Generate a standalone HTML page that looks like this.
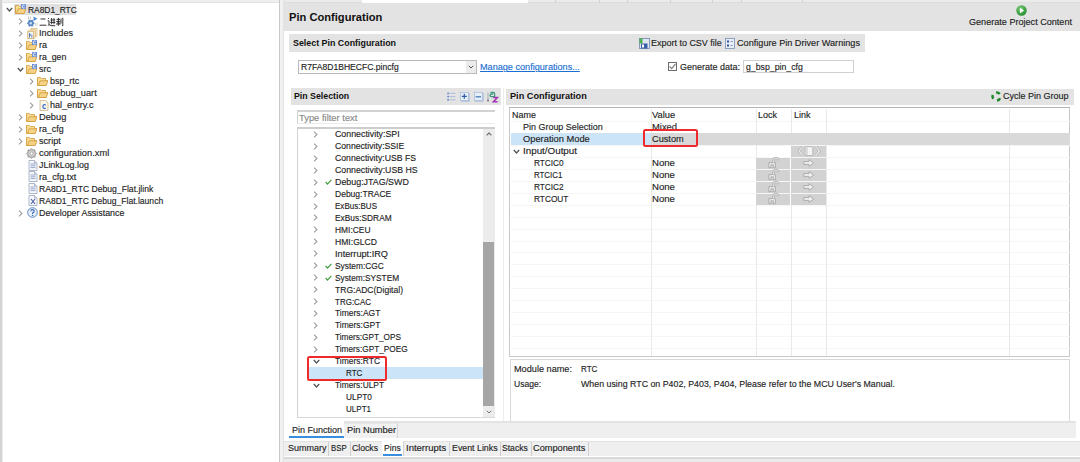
<!DOCTYPE html><html><head><meta charset="utf-8"><style>html,body{margin:0;padding:0;width:1080px;height:462px;overflow:hidden;background:#fff;}body{position:relative;font-family:"Liberation Sans", sans-serif;}div{box-sizing:border-box;}svg{overflow:visible}.t{-webkit-text-stroke:0.14px currentColor}</style></head><body>
<div style="position:absolute;left:0px;top:0px;width:280px;height:3px;background:#efefef;border-bottom:1px solid #e2e2e2"></div>
<div style="position:absolute;left:284px;top:0px;width:796px;height:3px;background:#ebebeb;border-bottom:1px solid #dedede"></div>
<div style="position:absolute;left:362px;top:0px;width:166px;height:3px;background:#fff"></div>
<div style="position:absolute;left:555px;top:0px;width:1px;height:2.5px;background:#d2d2d2"></div>
<div style="position:absolute;left:599.4px;top:0px;width:1px;height:2.5px;background:#d2d2d2"></div>
<div style="position:absolute;left:627px;top:0px;width:1px;height:2.5px;background:#d2d2d2"></div>
<div style="position:absolute;left:670px;top:0px;width:1px;height:2.5px;background:#d2d2d2"></div>
<div style="position:absolute;left:712px;top:0px;width:1px;height:2.5px;background:#d2d2d2"></div>
<div style="position:absolute;left:741px;top:0px;width:1px;height:2.5px;background:#d2d2d2"></div>
<div style="position:absolute;left:801.5px;top:0px;width:1px;height:2.5px;background:#d2d2d2"></div>
<div style="position:absolute;left:0px;top:0px;width:1.5px;height:462px;background:#d3d3d3"></div>
<div style="position:absolute;left:1.5px;top:0px;width:1px;height:462px;background:#ededed"></div>
<div style="position:absolute;left:279px;top:0px;width:1px;height:462px;background:#c9c9c9"></div>
<div style="position:absolute;left:280px;top:0px;width:4px;height:462px;background:#f1f1f1"></div>
<div style="position:absolute;left:283px;top:0px;width:1px;height:462px;background:#e3e3e3"></div>
<div style="position:absolute;left:14px;top:3.5px;width:62px;height:11.7px;background:#e0e0e0"></div>
<svg style="position:absolute;left:6.2px;top:7.3px" width="7" height="5" viewBox="0 0 7 5"><path d="M0.8 1 L3.5 4 L6.2 1" fill="none" stroke="#555" stroke-width="1.3"/></svg>
<svg style="position:absolute;left:15.2px;top:4.3px" width="11" height="10" viewBox="0 0 11 10"><path d="M0.5 2 L0.5 9.5 L9 9.5 L10.5 4.5 L3 4.5 L1.5 9" fill="#f3cf7a" stroke="#d29b3a" stroke-width="0.8"/><path d="M0.5 9.5 L0.5 1.5 L3.5 1.5 L4.5 2.5 L8.5 2.5 L8.5 4.5" fill="#f7dc92" stroke="#d29b3a" stroke-width="0.8"/><path d="M1.5 9.5 L3 4.8 L10.8 4.8 L9.2 9.5 Z" fill="#f5d386" stroke="#d29b3a" stroke-width="0.8"/><rect x="6" y="0" width="5" height="5" fill="#6d8fd6"/><path d="M9.6 1.3 Q8.5 0.6 7.7 1.3 Q7 2.5 7.7 3.7 Q8.5 4.4 9.6 3.7" fill="none" stroke="#fff" stroke-width="0.9"/></svg>
<div class="t" style="position:absolute;left:27.7px;top:3.5px;font-size:9.5px;line-height:11.97px;color:#222;font-weight:normal;white-space:pre;transform:scaleX(0.8830);transform-origin:0 0;">RA8D1_RTC</div>
<svg style="position:absolute;left:18.0px;top:18.07px" width="5" height="7" viewBox="0 0 5 7"><path d="M1 0.6 L4 3.5 L1 6.4" fill="none" stroke="#9c9c9c" stroke-width="1.05"/></svg>
<svg style="position:absolute;left:26.799999999999997px;top:15.770000000000001px" width="11" height="11" viewBox="0 0 11 11"><polygon points="7.40,7.20 6.05,8.50 5.60,10.32 3.80,9.80 2.00,10.32 1.55,8.50 0.20,7.20 1.55,5.90 2.00,4.08 3.80,4.60 5.60,4.08 6.05,5.90" fill="#5b86c4" stroke="#3d6aa8" stroke-width="0.5"/><circle cx="3.8" cy="7.2" r="1.2" fill="#cfe3f5"/><path d="M6.5 0.5 L10.5 2.8 L6.5 5.1 Z" fill="#4f8fd0"/><path d="M1.5 0.5 V3.5 M3.3 0.5 V3.5" stroke="#b0b0b0" stroke-width="0.7"/><path d="M8.5 7 V10 M10 7 V10" stroke="#c0c0c0" stroke-width="0.6"/></svg>
<svg style="position:absolute;left:39.3px;top:16.67px" width="25" height="10" viewBox="0 0 25 10"><g fill="none" stroke="#2a2a2a" stroke-width="0.95"><path d="M1.5 2 H6.5 M0.6 8.2 H7.4"/><path d="M9.2 1 L10 2 M8.6 3.8 H10 V7.6 L8.8 8.6 M10 7.6 Q11 9 16.2 8.8 M11.4 3 H16.2 M11.2 5.4 H16.4 M12.6 1 V7.2 M15 1 V7.2"/><path d="M17.6 2.4 H21 M19.4 0.8 V8.8 M17.2 4.4 H21.4 M18 6 V8 M18 6 H20.8 V7.8 M22 1.6 V6.6 M23.8 0.8 V8.8 L23 8.4"/></g></svg>
<svg style="position:absolute;left:18.0px;top:30.040000000000003px" width="5" height="7" viewBox="0 0 5 7"><path d="M1 0.6 L4 3.5 L1 6.4" fill="none" stroke="#9c9c9c" stroke-width="1.05"/></svg>
<svg style="position:absolute;left:26.9px;top:27.64px" width="11" height="11" viewBox="0 0 11 11"><rect x="4.5" y="0.5" width="5.5" height="7.5" fill="#fbf3de" stroke="#d9b66a" stroke-width="0.7"/><rect x="2.8" y="1.8" width="5.5" height="7.5" fill="#fbf3de" stroke="#d9b66a" stroke-width="0.7"/><rect x="0.8" y="3.2" width="6" height="7.5" fill="#eef2f8" stroke="#d2a650" stroke-width="0.8"/><path d="M2.5 5 V9.5 M2.5 7.3 Q4.5 6 4.8 7.5 V9.5" fill="none" stroke="#3d5fa8" stroke-width="0.8"/></svg>
<div class="t" style="position:absolute;left:38.8px;top:27.44px;font-size:9.5px;line-height:11.97px;color:#222;font-weight:normal;white-space:pre;transform:scaleX(0.9635);transform-origin:0 0;">Includes</div>
<svg style="position:absolute;left:18.0px;top:42.010000000000005px" width="5" height="7" viewBox="0 0 5 7"><path d="M1 0.6 L4 3.5 L1 6.4" fill="none" stroke="#9c9c9c" stroke-width="1.05"/></svg>
<svg style="position:absolute;left:26.299999999999997px;top:40.21px" width="11" height="10" viewBox="0 0 11 10"><path d="M0.5 2 L0.5 9.5 L9 9.5 L10.5 4.5 L3 4.5 L1.5 9" fill="#f3cf7a" stroke="#d29b3a" stroke-width="0.8"/><path d="M0.5 9.5 L0.5 1.5 L3.5 1.5 L4.5 2.5 L8.5 2.5 L8.5 4.5" fill="#f7dc92" stroke="#d29b3a" stroke-width="0.8"/><path d="M1.5 9.5 L3 4.8 L10.8 4.8 L9.2 9.5 Z" fill="#f5d386" stroke="#d29b3a" stroke-width="0.8"/><rect x="6" y="0" width="5" height="5" fill="#6d8fd6"/><path d="M9.6 1.3 Q8.5 0.6 7.7 1.3 Q7 2.5 7.7 3.7 Q8.5 4.4 9.6 3.7" fill="none" stroke="#fff" stroke-width="0.9"/></svg>
<div class="t" style="position:absolute;left:38.8px;top:39.410000000000004px;font-size:9.5px;line-height:11.97px;color:#222;font-weight:normal;white-space:pre;transform:scaleX(0.9482);transform-origin:0 0;">ra</div>
<svg style="position:absolute;left:18.0px;top:53.980000000000004px" width="5" height="7" viewBox="0 0 5 7"><path d="M1 0.6 L4 3.5 L1 6.4" fill="none" stroke="#9c9c9c" stroke-width="1.05"/></svg>
<svg style="position:absolute;left:26.299999999999997px;top:52.18px" width="11" height="10" viewBox="0 0 11 10"><path d="M0.5 2 L0.5 9.5 L9 9.5 L10.5 4.5 L3 4.5 L1.5 9" fill="#f3cf7a" stroke="#d29b3a" stroke-width="0.8"/><path d="M0.5 9.5 L0.5 1.5 L3.5 1.5 L4.5 2.5 L8.5 2.5 L8.5 4.5" fill="#f7dc92" stroke="#d29b3a" stroke-width="0.8"/><path d="M1.5 9.5 L3 4.8 L10.8 4.8 L9.2 9.5 Z" fill="#f5d386" stroke="#d29b3a" stroke-width="0.8"/><rect x="6" y="0" width="5" height="5" fill="#6d8fd6"/><path d="M9.6 1.3 Q8.5 0.6 7.7 1.3 Q7 2.5 7.7 3.7 Q8.5 4.4 9.6 3.7" fill="none" stroke="#fff" stroke-width="0.9"/></svg>
<div class="t" style="position:absolute;left:38.8px;top:51.38px;font-size:9.5px;line-height:11.97px;color:#222;font-weight:normal;white-space:pre;transform:scaleX(0.9259);transform-origin:0 0;">ra_gen</div>
<svg style="position:absolute;left:17.3px;top:67.15px" width="7" height="5" viewBox="0 0 7 5"><path d="M0.8 1 L3.5 4 L6.2 1" fill="none" stroke="#555" stroke-width="1.3"/></svg>
<svg style="position:absolute;left:26.299999999999997px;top:64.15px" width="11" height="10" viewBox="0 0 11 10"><path d="M0.5 2 L0.5 9.5 L9 9.5 L10.5 4.5 L3 4.5 L1.5 9" fill="#f3cf7a" stroke="#d29b3a" stroke-width="0.8"/><path d="M0.5 9.5 L0.5 1.5 L3.5 1.5 L4.5 2.5 L8.5 2.5 L8.5 4.5" fill="#f7dc92" stroke="#d29b3a" stroke-width="0.8"/><path d="M1.5 9.5 L3 4.8 L10.8 4.8 L9.2 9.5 Z" fill="#f5d386" stroke="#d29b3a" stroke-width="0.8"/><rect x="6" y="0" width="5" height="5" fill="#6d8fd6"/><path d="M9.6 1.3 Q8.5 0.6 7.7 1.3 Q7 2.5 7.7 3.7 Q8.5 4.4 9.6 3.7" fill="none" stroke="#fff" stroke-width="0.9"/></svg>
<div class="t" style="position:absolute;left:38.8px;top:63.35px;font-size:9.5px;line-height:11.97px;color:#222;font-weight:normal;white-space:pre;transform:scaleX(0.9470);transform-origin:0 0;">src</div>
<svg style="position:absolute;left:29.099999999999998px;top:77.92px" width="5" height="7" viewBox="0 0 5 7"><path d="M1 0.6 L4 3.5 L1 6.4" fill="none" stroke="#9c9c9c" stroke-width="1.05"/></svg>
<svg style="position:absolute;left:37.4px;top:76.12px" width="11" height="10" viewBox="0 0 11 10"><path d="M0.5 2 L0.5 9.5 L9 9.5 L10.5 4.5 L3 4.5 L1.5 9" fill="#f3cf7a" stroke="#d29b3a" stroke-width="0.8"/><path d="M0.5 9.5 L0.5 1.5 L3.5 1.5 L4.5 2.5 L8.5 2.5 L8.5 4.5" fill="#f7dc92" stroke="#d29b3a" stroke-width="0.8"/><path d="M1.5 9.5 L3 4.8 L10.8 4.8 L9.2 9.5 Z" fill="#f5d386" stroke="#d29b3a" stroke-width="0.8"/></svg>
<div class="t" style="position:absolute;left:49.9px;top:75.32000000000001px;font-size:9.5px;line-height:11.97px;color:#222;font-weight:normal;white-space:pre;transform:scaleX(0.9404);transform-origin:0 0;">bsp_rtc</div>
<svg style="position:absolute;left:29.099999999999998px;top:89.89px" width="5" height="7" viewBox="0 0 5 7"><path d="M1 0.6 L4 3.5 L1 6.4" fill="none" stroke="#9c9c9c" stroke-width="1.05"/></svg>
<svg style="position:absolute;left:37.4px;top:88.09px" width="11" height="10" viewBox="0 0 11 10"><path d="M0.5 2 L0.5 9.5 L9 9.5 L10.5 4.5 L3 4.5 L1.5 9" fill="#f3cf7a" stroke="#d29b3a" stroke-width="0.8"/><path d="M0.5 9.5 L0.5 1.5 L3.5 1.5 L4.5 2.5 L8.5 2.5 L8.5 4.5" fill="#f7dc92" stroke="#d29b3a" stroke-width="0.8"/><path d="M1.5 9.5 L3 4.8 L10.8 4.8 L9.2 9.5 Z" fill="#f5d386" stroke="#d29b3a" stroke-width="0.8"/></svg>
<div class="t" style="position:absolute;left:49.9px;top:87.29px;font-size:9.5px;line-height:11.97px;color:#222;font-weight:normal;white-space:pre;transform:scaleX(0.9713);transform-origin:0 0;">debug_uart</div>
<svg style="position:absolute;left:29.099999999999998px;top:101.86px" width="5" height="7" viewBox="0 0 5 7"><path d="M1 0.6 L4 3.5 L1 6.4" fill="none" stroke="#9c9c9c" stroke-width="1.05"/></svg>
<svg style="position:absolute;left:38.6px;top:99.66000000000001px" width="10" height="11" viewBox="0 0 10 11"><path d="M1 0.5 L6.5 0.5 L9 3 L9 10.5 L1 10.5 Z" fill="#fbf6e6" stroke="#c9b58a" stroke-width="0.8"/><path d="M6.8 5.2 Q5.5 4.3 4.3 5.1 Q3.4 6.5 4.3 8 Q5.5 8.8 6.8 8" fill="none" stroke="#3d6fc9" stroke-width="1.2"/></svg>
<div class="t" style="position:absolute;left:49.9px;top:99.26px;font-size:9.5px;line-height:11.97px;color:#222;font-weight:normal;white-space:pre;transform:scaleX(0.9527);transform-origin:0 0;">hal_entry.c</div>
<svg style="position:absolute;left:18.0px;top:113.83px" width="5" height="7" viewBox="0 0 5 7"><path d="M1 0.6 L4 3.5 L1 6.4" fill="none" stroke="#9c9c9c" stroke-width="1.05"/></svg>
<svg style="position:absolute;left:26.299999999999997px;top:112.03px" width="11" height="10" viewBox="0 0 11 10"><path d="M0.5 2 L0.5 9.5 L9 9.5 L10.5 4.5 L3 4.5 L1.5 9" fill="#f3cf7a" stroke="#d29b3a" stroke-width="0.8"/><path d="M0.5 9.5 L0.5 1.5 L3.5 1.5 L4.5 2.5 L8.5 2.5 L8.5 4.5" fill="#f7dc92" stroke="#d29b3a" stroke-width="0.8"/><path d="M1.5 9.5 L3 4.8 L10.8 4.8 L9.2 9.5 Z" fill="#f5d386" stroke="#d29b3a" stroke-width="0.8"/></svg>
<div class="t" style="position:absolute;left:38.8px;top:111.23px;font-size:9.5px;line-height:11.97px;color:#222;font-weight:normal;white-space:pre;transform:scaleX(0.9750);transform-origin:0 0;">Debug</div>
<svg style="position:absolute;left:18.0px;top:125.8px" width="5" height="7" viewBox="0 0 5 7"><path d="M1 0.6 L4 3.5 L1 6.4" fill="none" stroke="#9c9c9c" stroke-width="1.05"/></svg>
<svg style="position:absolute;left:26.299999999999997px;top:124.0px" width="11" height="10" viewBox="0 0 11 10"><path d="M0.5 2 L0.5 9.5 L9 9.5 L10.5 4.5 L3 4.5 L1.5 9" fill="#f3cf7a" stroke="#d29b3a" stroke-width="0.8"/><path d="M0.5 9.5 L0.5 1.5 L3.5 1.5 L4.5 2.5 L8.5 2.5 L8.5 4.5" fill="#f7dc92" stroke="#d29b3a" stroke-width="0.8"/><path d="M1.5 9.5 L3 4.8 L10.8 4.8 L9.2 9.5 Z" fill="#f5d386" stroke="#d29b3a" stroke-width="0.8"/></svg>
<div class="t" style="position:absolute;left:38.8px;top:123.2px;font-size:9.5px;line-height:11.97px;color:#222;font-weight:normal;white-space:pre;transform:scaleX(0.9316);transform-origin:0 0;">ra_cfg</div>
<svg style="position:absolute;left:18.0px;top:137.77px" width="5" height="7" viewBox="0 0 5 7"><path d="M1 0.6 L4 3.5 L1 6.4" fill="none" stroke="#9c9c9c" stroke-width="1.05"/></svg>
<svg style="position:absolute;left:26.299999999999997px;top:135.97000000000003px" width="11" height="10" viewBox="0 0 11 10"><path d="M0.5 2 L0.5 9.5 L9 9.5 L10.5 4.5 L3 4.5 L1.5 9" fill="#f3cf7a" stroke="#d29b3a" stroke-width="0.8"/><path d="M0.5 9.5 L0.5 1.5 L3.5 1.5 L4.5 2.5 L8.5 2.5 L8.5 4.5" fill="#f7dc92" stroke="#d29b3a" stroke-width="0.8"/><path d="M1.5 9.5 L3 4.8 L10.8 4.8 L9.2 9.5 Z" fill="#f5d386" stroke="#d29b3a" stroke-width="0.8"/></svg>
<div class="t" style="position:absolute;left:38.8px;top:135.17000000000002px;font-size:9.5px;line-height:11.97px;color:#222;font-weight:normal;white-space:pre;transform:scaleX(0.9602);transform-origin:0 0;">script</div>
<svg style="position:absolute;left:26.299999999999997px;top:147.54000000000002px" width="11" height="11" viewBox="0 0 11 11"><polygon points="10.50,5.50 9.10,6.99 9.04,9.04 6.99,9.10 5.50,10.50 4.01,9.10 1.96,9.04 1.90,6.99 0.50,5.50 1.90,4.01 1.96,1.96 4.01,1.90 5.50,0.50 6.99,1.90 9.04,1.96 9.10,4.01" fill="#bdbdbd" stroke="#8a8a8a" stroke-width="0.7"/><circle cx="5.5" cy="5.5" r="2.8" fill="#d6d6d6"/><circle cx="5.5" cy="5.5" r="1.5" fill="#fff" stroke="#8a8a8a" stroke-width="0.6"/></svg>
<div class="t" style="position:absolute;left:38.8px;top:147.14000000000001px;font-size:9.5px;line-height:11.97px;color:#222;font-weight:normal;white-space:pre;transform:scaleX(0.9775);transform-origin:0 0;">configuration.xml</div>
<svg style="position:absolute;left:27.499999999999996px;top:159.51000000000002px" width="10" height="11" viewBox="0 0 10 11"><path d="M1 0.5 L6.5 0.5 L9 3 L9 10.5 L1 10.5 Z" fill="#f8f8fb" stroke="#9aa7c0" stroke-width="0.8"/><path d="M6.5 0.5 L6.5 3 L9 3" fill="#dde" stroke="#9aa7c0" stroke-width="0.7"/><path d="M2.5 4 H7.5 M2.5 5.8 H7.5 M2.5 7.6 H7.5" stroke="#7d93c4" stroke-width="0.8"/></svg>
<div class="t" style="position:absolute;left:38.8px;top:159.11px;font-size:9.5px;line-height:11.97px;color:#222;font-weight:normal;white-space:pre;transform:scaleX(0.9352);transform-origin:0 0;">JLinkLog.log</div>
<svg style="position:absolute;left:27.499999999999996px;top:171.48000000000002px" width="10" height="11" viewBox="0 0 10 11"><path d="M1 0.5 L6.5 0.5 L9 3 L9 10.5 L1 10.5 Z" fill="#f8f8fb" stroke="#9aa7c0" stroke-width="0.8"/><path d="M6.5 0.5 L6.5 3 L9 3" fill="#dde" stroke="#9aa7c0" stroke-width="0.7"/><path d="M2.5 4 H7.5 M2.5 5.8 H7.5 M2.5 7.6 H7.5" stroke="#7d93c4" stroke-width="0.8"/></svg>
<div class="t" style="position:absolute;left:38.8px;top:171.08px;font-size:9.5px;line-height:11.97px;color:#222;font-weight:normal;white-space:pre;transform:scaleX(0.9571);transform-origin:0 0;">ra_cfg.txt</div>
<svg style="position:absolute;left:27.499999999999996px;top:183.45000000000002px" width="10" height="11" viewBox="0 0 10 11"><path d="M1 0.5 L6.5 0.5 L9 3 L9 10.5 L1 10.5 Z" fill="#f8f8fb" stroke="#9aa7c0" stroke-width="0.8"/><path d="M6.5 0.5 L6.5 3 L9 3" fill="#dde" stroke="#9aa7c0" stroke-width="0.7"/><path d="M2.5 4 H7.5 M2.5 5.8 H7.5 M2.5 7.6 H7.5" stroke="#7d93c4" stroke-width="0.8"/></svg>
<div class="t" style="position:absolute;left:38.8px;top:183.05px;font-size:9.5px;line-height:11.97px;color:#222;font-weight:normal;white-space:pre;transform:scaleX(0.9069);transform-origin:0 0;">RA8D1_RTC Debug_Flat.jlink</div>
<svg style="position:absolute;left:27.499999999999996px;top:195.42000000000002px" width="10" height="11" viewBox="0 0 10 11"><path d="M1 0.5 L6.5 0.5 L9 3 L9 10.5 L1 10.5 Z" fill="#f8f8fb" stroke="#9aa7c0" stroke-width="0.8"/><path d="M6.5 0.5 L6.5 3 L9 3" fill="#dde" stroke="#9aa7c0" stroke-width="0.7"/><path d="M3 4 L7 9 M7 4 L3 9" stroke="#4a5fa5" stroke-width="1.1"/></svg>
<div class="t" style="position:absolute;left:38.8px;top:195.02px;font-size:9.5px;line-height:11.97px;color:#222;font-weight:normal;white-space:pre;transform:scaleX(0.9022);transform-origin:0 0;">RA8D1_RTC Debug_Flat.launch</div>
<svg style="position:absolute;left:18.0px;top:209.59px" width="5" height="7" viewBox="0 0 5 7"><path d="M1 0.6 L4 3.5 L1 6.4" fill="none" stroke="#9c9c9c" stroke-width="1.05"/></svg>
<svg style="position:absolute;left:26.499999999999996px;top:207.29000000000002px" width="11" height="11" viewBox="0 0 11 11"><circle cx="5.5" cy="5.5" r="4.8" fill="#e8f0fa" stroke="#5a88c8" stroke-width="1"/><path d="M3.8 4.3 Q3.8 2.6 5.5 2.6 Q7.2 2.6 7.2 4.2 Q7.2 5.2 5.6 5.9 V6.9" fill="none" stroke="#3b6bb0" stroke-width="1.1"/><circle cx="5.6" cy="8.4" r="0.7" fill="#3b6bb0"/></svg>
<div class="t" style="position:absolute;left:38.8px;top:206.99px;font-size:9.5px;line-height:11.97px;color:#222;font-weight:normal;white-space:pre;transform:scaleX(0.9348);transform-origin:0 0;">Developer Assistance</div>
<div style="position:absolute;left:284px;top:3px;width:796px;height:27.5px;background:#e3e3e3"></div>
<div class="t" style="position:absolute;left:289.4px;top:9.8px;font-size:11.5px;line-height:14px;color:#111;font-weight:bold;white-space:pre;transform:scaleX(0.9682);transform-origin:0 0;-webkit-text-stroke:0">Pin Configuration</div>
<svg style="position:absolute;left:1016px;top:5px" width="11" height="11" viewBox="0 0 11 11"><defs><radialGradient id="gg" cx="0.4" cy="0.35" r="0.7"><stop offset="0" stop-color="#7fd07a"/><stop offset="1" stop-color="#1f8a2a"/></radialGradient></defs><circle cx="5.5" cy="5.5" r="5.2" fill="url(#gg)"/><path d="M4 2.8 L8 5.5 L4 8.2 Z" fill="#fff"/></svg>
<div class="t" style="position:absolute;left:969.2px;top:15.5px;font-size:9.5px;line-height:12px;color:#222;font-weight:normal;white-space:pre;transform:scaleX(0.9561);transform-origin:0 0;">Generate Project Content</div>
<div style="position:absolute;left:289px;top:34.3px;width:576px;height:17.7px;background:#e3e3e3"></div>
<div class="t" style="position:absolute;left:293px;top:37.3px;font-size:9.5px;line-height:12px;color:#111;font-weight:bold;white-space:pre;transform:scaleX(0.9337);transform-origin:0 0;-webkit-text-stroke:0">Select Pin Configuration</div>
<svg style="position:absolute;left:638.5px;top:37.5px" width="11" height="11" viewBox="0 0 11 11"><rect x="0.5" y="0.5" width="10" height="10" fill="#dfe6f0" stroke="#6f86b0" stroke-width="0.8"/><rect x="2" y="5.5" width="6.5" height="5" fill="#3b5fa6"/><rect x="3" y="6.5" width="2" height="3" fill="#fff"/><rect x="0.5" y="0.5" width="3" height="5" fill="#4caf50"/></svg>
<div class="t" style="position:absolute;left:650.6px;top:37.3px;font-size:9.5px;line-height:12px;color:#222;font-weight:normal;white-space:pre;transform:scaleX(0.9442);transform-origin:0 0;">Export to CSV file</div>
<svg style="position:absolute;left:725px;top:37.5px" width="10" height="11" viewBox="0 0 10 11"><rect x="0.5" y="0.5" width="9" height="10" fill="#e8eef8" stroke="#7a8fb5" stroke-width="0.8"/><rect x="2" y="2.5" width="2" height="2" fill="#2d4f9a"/><rect x="2" y="6.5" width="2" height="2" fill="#2d4f9a"/><path d="M5.5 3.5 H8 M5.5 7.5 H8" stroke="#7a8fb5" stroke-width="0.8"/></svg>
<div class="t" style="position:absolute;left:736.6px;top:37.3px;font-size:9.5px;line-height:12px;color:#222;font-weight:normal;white-space:pre;transform:scaleX(0.9613);transform-origin:0 0;">Configure Pin Driver Warnings</div>
<div style="position:absolute;left:298px;top:60px;width:178.6px;height:14.2px;background:#fff;border:1px solid #bababa"></div>
<div style="position:absolute;left:465.5px;top:61px;width:10.1px;height:12.2px;background:#ececec"></div>
<svg style="position:absolute;left:468px;top:65px" width="6" height="4" viewBox="0 0 6 4"><path d="M0.8 0.8 L3 3 L5.2 0.8" fill="none" stroke="#555" stroke-width="1"/></svg>
<div class="t" style="position:absolute;left:301px;top:61.2px;font-size:9.5px;line-height:12px;color:#222;font-weight:normal;white-space:pre;transform:scaleX(0.9027);transform-origin:0 0;">R7FA8D1BHECFC.pincfg</div>
<div class="t" style="position:absolute;left:480.3px;top:61.2px;font-size:9.5px;line-height:12px;color:#1b6fd1;font-weight:normal;white-space:pre;transform:scaleX(0.9592);transform-origin:0 0;text-decoration:underline">Manage configurations...</div>
<div style="position:absolute;left:667.9px;top:61.6px;width:9.3px;height:9.2px;background:#fff;border:1.1px solid #6e6e6e"></div>
<svg style="position:absolute;left:669.2px;top:62.8px" width="7" height="7" viewBox="0 0 7 7"><path d="M0.6 3.4 L2.7 5.6 L6.6 0.9" fill="none" stroke="#7a7a7a" stroke-width="1.1"/></svg>
<div class="t" style="position:absolute;left:680px;top:61.2px;font-size:9.5px;line-height:12px;color:#222;font-weight:normal;white-space:pre;transform:scaleX(0.9481);transform-origin:0 0;">Generate data:</div>
<div style="position:absolute;left:743.4px;top:60px;width:110.2px;height:13.4px;background:#fff;border:1px solid #d0d0d0"></div>
<div class="t" style="position:absolute;left:745.7px;top:61.2px;font-size:9.5px;line-height:12px;color:#222;font-weight:normal;white-space:pre;transform:scaleX(0.9189);transform-origin:0 0;">g_bsp_pin_cfg</div>
<div style="position:absolute;left:290.8px;top:88.4px;width:210.2px;height:16.3px;background:#e3e3e3"></div>
<div class="t" style="position:absolute;left:294.2px;top:90.3px;font-size:9.5px;line-height:12px;color:#111;font-weight:bold;white-space:pre;transform:scaleX(0.9253);transform-origin:0 0;-webkit-text-stroke:0">Pin Selection</div>
<svg style="position:absolute;left:446.5px;top:92px" width="9" height="9" viewBox="0 0 9 9"><rect x="0.2" y="0.6" width="1.8" height="1.6" fill="#6f8cc8"/><rect x="0.2" y="3.8" width="1.8" height="1.6" fill="#6f8cc8"/><rect x="0.2" y="7" width="1.8" height="1.6" fill="#6f8cc8"/><path d="M2.5 1.4 H8.5 M2.5 4.6 H8.5 M2.5 7.8 H8.5" stroke="#9fb3dc" stroke-width="0.8"/></svg>
<svg style="position:absolute;left:459.8px;top:91.6px" width="10" height="10" viewBox="0 0 10 10"><rect x="1.5" y="1.5" width="8" height="8" fill="#c9d6ea" stroke="#a9bad6" stroke-width="0.6"/><rect x="0.3" y="0.3" width="8" height="8" fill="#e6eef8" stroke="#a5b7d6" stroke-width="0.7"/><path d="M4.3 1.8 V6.8 M1.8 4.3 H6.8" stroke="#2f5d9e" stroke-width="1.2"/></svg>
<svg style="position:absolute;left:473.5px;top:91.6px" width="10" height="10" viewBox="0 0 10 10"><rect x="1.5" y="1.5" width="8" height="8" fill="#c9d6ea" stroke="#a9bad6" stroke-width="0.6"/><rect x="0.3" y="0.3" width="8" height="8" fill="#e6eef8" stroke="#a5b7d6" stroke-width="0.7"/><path d="M1.6 4.8 H7" stroke="#4a78b8" stroke-width="1.3"/></svg>
<svg style="position:absolute;left:486.5px;top:90.5px" width="11" height="12" viewBox="0 0 11 12"><path d="M1 1.8 V9" stroke="#9aa6b8" stroke-width="0.9"/><circle cx="1" cy="9.6" r="1" fill="#777"/><path d="M3.4 1.5 H6.5 Q7.6 1.5 7.6 2.7 V5.6 H4.3 Q3 5.6 3 4.3 Q3 3.2 4.3 3.2 H6" fill="none" stroke="#3a9a7c" stroke-width="1.3"/><path d="M6.2 6.6 H10.4 L6.4 10.8 H10.6" fill="none" stroke="#a036b0" stroke-width="1.5"/></svg>
<div style="position:absolute;left:297.2px;top:110px;width:198px;height:13.6px;background:#fff;border-left:1.5px solid #d4d4d4;border-bottom:1px solid #ededed;border-top:2px solid #d2d2d2"></div>
<div class="t" style="position:absolute;left:299.3px;top:111.5px;font-size:9.5px;line-height:12px;color:#888;font-weight:normal;white-space:pre;transform:scaleX(0.9875);transform-origin:0 0;">Type filter text</div>
<div style="position:absolute;left:297.2px;top:127px;width:198px;height:291.3px;background:#fff;border-left:1.5px solid #d2d2d2;border-bottom:1px solid #d8d8d8;border-top:2px solid #cdcdcd"></div>
<div style="position:absolute;left:483px;top:129px;width:12px;height:288.3px;background:#ececec"></div>
<div style="position:absolute;left:483.3px;top:242px;width:11px;height:163.6px;background:#a6a6a6"></div>
<svg style="position:absolute;left:486.2px;top:132px" width="6" height="4" viewBox="0 0 6 4"><path d="M0.6 3.4 L3 1 L5.4 3.4" fill="none" stroke="#777" stroke-width="1.3"/></svg>
<svg style="position:absolute;left:486px;top:410px" width="6" height="4" viewBox="0 0 6 4"><path d="M0.8 0.8 L3 3 L5.2 0.8" fill="none" stroke="#666" stroke-width="0.9"/></svg>
<svg style="position:absolute;left:312.8px;top:130.79999999999998px" width="5" height="7" viewBox="0 0 5 7"><path d="M1 0.6 L4 3.5 L1 6.4" fill="none" stroke="#9c9c9c" stroke-width="1.05"/></svg>
<div class="t" style="position:absolute;left:334.9px;top:128.2px;font-size:9.5px;line-height:11.95px;color:#222;font-weight:normal;white-space:pre;transform:scaleX(0.9282);transform-origin:0 0;">Connectivity:SPI</div>
<svg style="position:absolute;left:312.8px;top:142.74999999999997px" width="5" height="7" viewBox="0 0 5 7"><path d="M1 0.6 L4 3.5 L1 6.4" fill="none" stroke="#9c9c9c" stroke-width="1.05"/></svg>
<div class="t" style="position:absolute;left:334.9px;top:140.14999999999998px;font-size:9.5px;line-height:11.95px;color:#222;font-weight:normal;white-space:pre;transform:scaleX(0.9113);transform-origin:0 0;">Connectivity:SSIE</div>
<svg style="position:absolute;left:312.8px;top:154.7px" width="5" height="7" viewBox="0 0 5 7"><path d="M1 0.6 L4 3.5 L1 6.4" fill="none" stroke="#9c9c9c" stroke-width="1.05"/></svg>
<div class="t" style="position:absolute;left:334.9px;top:152.1px;font-size:9.5px;line-height:11.95px;color:#222;font-weight:normal;white-space:pre;transform:scaleX(0.9132);transform-origin:0 0;">Connectivity:USB FS</div>
<svg style="position:absolute;left:312.8px;top:166.64999999999998px" width="5" height="7" viewBox="0 0 5 7"><path d="M1 0.6 L4 3.5 L1 6.4" fill="none" stroke="#9c9c9c" stroke-width="1.05"/></svg>
<div class="t" style="position:absolute;left:334.9px;top:164.04999999999998px;font-size:9.5px;line-height:11.95px;color:#222;font-weight:normal;white-space:pre;transform:scaleX(0.9213);transform-origin:0 0;">Connectivity:USB HS</div>
<svg style="position:absolute;left:312.8px;top:178.6px" width="5" height="7" viewBox="0 0 5 7"><path d="M1 0.6 L4 3.5 L1 6.4" fill="none" stroke="#9c9c9c" stroke-width="1.05"/></svg>
<svg style="position:absolute;left:325px;top:179.0px" width="7" height="6" viewBox="0 0 7 6"><path d="M0.6 3 L2.5 5 L6.4 0.8" fill="none" stroke="#4aa04a" stroke-width="1.2"/></svg>
<div class="t" style="position:absolute;left:334.9px;top:176.0px;font-size:9.5px;line-height:11.95px;color:#222;font-weight:normal;white-space:pre;transform:scaleX(0.9340);transform-origin:0 0;">Debug:JTAG/SWD</div>
<svg style="position:absolute;left:312.8px;top:190.54999999999998px" width="5" height="7" viewBox="0 0 5 7"><path d="M1 0.6 L4 3.5 L1 6.4" fill="none" stroke="#9c9c9c" stroke-width="1.05"/></svg>
<div class="t" style="position:absolute;left:334.9px;top:187.95px;font-size:9.5px;line-height:11.95px;color:#222;font-weight:normal;white-space:pre;transform:scaleX(0.8959);transform-origin:0 0;">Debug:TRACE</div>
<svg style="position:absolute;left:312.8px;top:202.49999999999997px" width="5" height="7" viewBox="0 0 5 7"><path d="M1 0.6 L4 3.5 L1 6.4" fill="none" stroke="#9c9c9c" stroke-width="1.05"/></svg>
<div class="t" style="position:absolute;left:334.9px;top:199.89999999999998px;font-size:9.5px;line-height:11.95px;color:#222;font-weight:normal;white-space:pre;transform:scaleX(0.8461);transform-origin:0 0;">ExBus:BUS</div>
<svg style="position:absolute;left:312.8px;top:214.44999999999996px" width="5" height="7" viewBox="0 0 5 7"><path d="M1 0.6 L4 3.5 L1 6.4" fill="none" stroke="#9c9c9c" stroke-width="1.05"/></svg>
<div class="t" style="position:absolute;left:334.9px;top:211.84999999999997px;font-size:9.5px;line-height:11.95px;color:#222;font-weight:normal;white-space:pre;transform:scaleX(0.8803);transform-origin:0 0;">ExBus:SDRAM</div>
<svg style="position:absolute;left:312.8px;top:226.39999999999998px" width="5" height="7" viewBox="0 0 5 7"><path d="M1 0.6 L4 3.5 L1 6.4" fill="none" stroke="#9c9c9c" stroke-width="1.05"/></svg>
<div class="t" style="position:absolute;left:334.9px;top:223.79999999999998px;font-size:9.5px;line-height:11.95px;color:#222;font-weight:normal;white-space:pre;transform:scaleX(0.8847);transform-origin:0 0;">HMI:CEU</div>
<svg style="position:absolute;left:312.8px;top:238.35px" width="5" height="7" viewBox="0 0 5 7"><path d="M1 0.6 L4 3.5 L1 6.4" fill="none" stroke="#9c9c9c" stroke-width="1.05"/></svg>
<div class="t" style="position:absolute;left:334.9px;top:235.75px;font-size:9.5px;line-height:11.95px;color:#222;font-weight:normal;white-space:pre;transform:scaleX(0.9041);transform-origin:0 0;">HMI:GLCD</div>
<svg style="position:absolute;left:312.8px;top:250.29999999999998px" width="5" height="7" viewBox="0 0 5 7"><path d="M1 0.6 L4 3.5 L1 6.4" fill="none" stroke="#9c9c9c" stroke-width="1.05"/></svg>
<div class="t" style="position:absolute;left:334.9px;top:247.7px;font-size:9.5px;line-height:11.95px;color:#222;font-weight:normal;white-space:pre;transform:scaleX(0.9650);transform-origin:0 0;">Interrupt:IRQ</div>
<svg style="position:absolute;left:312.8px;top:262.25px" width="5" height="7" viewBox="0 0 5 7"><path d="M1 0.6 L4 3.5 L1 6.4" fill="none" stroke="#9c9c9c" stroke-width="1.05"/></svg>
<svg style="position:absolute;left:325px;top:262.65px" width="7" height="6" viewBox="0 0 7 6"><path d="M0.6 3 L2.5 5 L6.4 0.8" fill="none" stroke="#4aa04a" stroke-width="1.2"/></svg>
<div class="t" style="position:absolute;left:334.9px;top:259.65px;font-size:9.5px;line-height:11.95px;color:#222;font-weight:normal;white-space:pre;transform:scaleX(0.8821);transform-origin:0 0;">System:CGC</div>
<svg style="position:absolute;left:312.8px;top:274.2px" width="5" height="7" viewBox="0 0 5 7"><path d="M1 0.6 L4 3.5 L1 6.4" fill="none" stroke="#9c9c9c" stroke-width="1.05"/></svg>
<svg style="position:absolute;left:325px;top:274.59999999999997px" width="7" height="6" viewBox="0 0 7 6"><path d="M0.6 3 L2.5 5 L6.4 0.8" fill="none" stroke="#4aa04a" stroke-width="1.2"/></svg>
<div class="t" style="position:absolute;left:334.9px;top:271.59999999999997px;font-size:9.5px;line-height:11.95px;color:#222;font-weight:normal;white-space:pre;transform:scaleX(0.8736);transform-origin:0 0;">System:SYSTEM</div>
<svg style="position:absolute;left:312.8px;top:286.15px" width="5" height="7" viewBox="0 0 5 7"><path d="M1 0.6 L4 3.5 L1 6.4" fill="none" stroke="#9c9c9c" stroke-width="1.05"/></svg>
<div class="t" style="position:absolute;left:334.9px;top:283.54999999999995px;font-size:9.5px;line-height:11.95px;color:#222;font-weight:normal;white-space:pre;transform:scaleX(0.9008);transform-origin:0 0;">TRG:ADC(Digital)</div>
<svg style="position:absolute;left:312.8px;top:298.1px" width="5" height="7" viewBox="0 0 5 7"><path d="M1 0.6 L4 3.5 L1 6.4" fill="none" stroke="#9c9c9c" stroke-width="1.05"/></svg>
<div class="t" style="position:absolute;left:334.9px;top:295.5px;font-size:9.5px;line-height:11.95px;color:#222;font-weight:normal;white-space:pre;transform:scaleX(0.8421);transform-origin:0 0;">TRG:CAC</div>
<svg style="position:absolute;left:312.8px;top:310.05px" width="5" height="7" viewBox="0 0 5 7"><path d="M1 0.6 L4 3.5 L1 6.4" fill="none" stroke="#9c9c9c" stroke-width="1.05"/></svg>
<div class="t" style="position:absolute;left:334.9px;top:307.45px;font-size:9.5px;line-height:11.95px;color:#222;font-weight:normal;white-space:pre;transform:scaleX(0.8929);transform-origin:0 0;">Timers:AGT</div>
<svg style="position:absolute;left:312.8px;top:322.0px" width="5" height="7" viewBox="0 0 5 7"><path d="M1 0.6 L4 3.5 L1 6.4" fill="none" stroke="#9c9c9c" stroke-width="1.05"/></svg>
<div class="t" style="position:absolute;left:334.9px;top:319.4px;font-size:9.5px;line-height:11.95px;color:#222;font-weight:normal;white-space:pre;transform:scaleX(0.8929);transform-origin:0 0;">Timers:GPT</div>
<svg style="position:absolute;left:312.8px;top:333.95px" width="5" height="7" viewBox="0 0 5 7"><path d="M1 0.6 L4 3.5 L1 6.4" fill="none" stroke="#9c9c9c" stroke-width="1.05"/></svg>
<div class="t" style="position:absolute;left:334.9px;top:331.34999999999997px;font-size:9.5px;line-height:11.95px;color:#222;font-weight:normal;white-space:pre;transform:scaleX(0.8663);transform-origin:0 0;">Timers:GPT_OPS</div>
<svg style="position:absolute;left:312.8px;top:345.9px" width="5" height="7" viewBox="0 0 5 7"><path d="M1 0.6 L4 3.5 L1 6.4" fill="none" stroke="#9c9c9c" stroke-width="1.05"/></svg>
<div class="t" style="position:absolute;left:334.9px;top:343.29999999999995px;font-size:9.5px;line-height:11.95px;color:#222;font-weight:normal;white-space:pre;transform:scaleX(0.8698);transform-origin:0 0;">Timers:GPT_POEG</div>
<svg style="position:absolute;left:312.5px;top:359.05px" width="7" height="5" viewBox="0 0 7 5"><path d="M0.8 1 L3.5 4 L6.2 1" fill="none" stroke="#555" stroke-width="1.3"/></svg>
<div class="t" style="position:absolute;left:334.9px;top:355.25px;font-size:9.5px;line-height:11.95px;color:#222;font-weight:normal;white-space:pre;transform:scaleX(0.8881);transform-origin:0 0;">Timers:RTC</div>
<div style="position:absolute;left:307.7px;top:367.4px;width:175.6px;height:11.8px;background:#cce4f7"></div>
<div class="t" style="position:absolute;left:345.5px;top:367.2px;font-size:9.5px;line-height:11.95px;color:#222;font-weight:normal;white-space:pre;transform:scaleX(0.8471);transform-origin:0 0;">RTC</div>
<svg style="position:absolute;left:312.5px;top:382.95px" width="7" height="5" viewBox="0 0 7 5"><path d="M0.8 1 L3.5 4 L6.2 1" fill="none" stroke="#555" stroke-width="1.3"/></svg>
<div class="t" style="position:absolute;left:334.9px;top:379.15px;font-size:9.5px;line-height:11.95px;color:#222;font-weight:normal;white-space:pre;transform:scaleX(0.8829);transform-origin:0 0;">Timers:ULPT</div>
<div class="t" style="position:absolute;left:345.5px;top:391.09999999999997px;font-size:9.5px;line-height:11.95px;color:#222;font-weight:normal;white-space:pre;transform:scaleX(0.8756);transform-origin:0 0;">ULPT0</div>
<div class="t" style="position:absolute;left:345.5px;top:403.04999999999995px;font-size:9.5px;line-height:11.95px;color:#222;font-weight:normal;white-space:pre;transform:scaleX(0.8486);transform-origin:0 0;">ULPT1</div>
<div style="position:absolute;left:307.4px;top:355.6px;width:80.1px;height:25px;border:2px solid #ee2a2a;border-radius:2.5px"></div>
<div style="position:absolute;left:503px;top:88px;width:1px;height:334px;background:#ececec"></div>
<div style="position:absolute;left:506.2px;top:88.5px;width:567.6px;height:16.1px;background:#e3e3e3"></div>
<div class="t" style="position:absolute;left:509.5px;top:90.3px;font-size:9.5px;line-height:12px;color:#111;font-weight:bold;white-space:pre;transform:scaleX(0.9638);transform-origin:0 0;-webkit-text-stroke:0">Pin Configuration</div>
<svg style="position:absolute;left:991px;top:90.6px" width="11" height="11" viewBox="0 0 11 11"><path d="M5.15 1.52 A4.0 4.0 0 0 1 8.69 3.09" fill="none" stroke="#22882c" stroke-width="2.6"/><path d="M9.13 7.19 A4.0 4.0 0 0 1 5.99 9.47" fill="none" stroke="#22882c" stroke-width="2.6"/><path d="M2.22 7.79 A4.0 4.0 0 0 1 1.82 3.94" fill="none" stroke="#22882c" stroke-width="2.6"/></svg>
<div class="t" style="position:absolute;left:1002.5px;top:90.0px;font-size:9.5px;line-height:12px;color:#222;font-weight:normal;white-space:pre;transform:scaleX(0.9469);transform-origin:0 0;">Cycle Pin Group</div>
<div style="position:absolute;left:509.3px;top:106.8px;width:561.2px;height:249.8px;background:#fff;border:1px solid #c8c8c8;border-top:1.5px solid #b4b4b4"></div>
<div style="position:absolute;left:510.5px;top:121.0px;width:559px;height:1px;background:#f6f6f6"></div>
<div style="position:absolute;left:510.5px;top:132.95px;width:559px;height:1px;background:#f6f6f6"></div>
<div style="position:absolute;left:510.5px;top:144.9px;width:559px;height:1px;background:#f6f6f6"></div>
<div style="position:absolute;left:510.5px;top:156.85px;width:559px;height:1px;background:#f6f6f6"></div>
<div style="position:absolute;left:510.5px;top:168.8px;width:559px;height:1px;background:#f6f6f6"></div>
<div style="position:absolute;left:510.5px;top:180.75px;width:559px;height:1px;background:#f6f6f6"></div>
<div style="position:absolute;left:510.5px;top:192.7px;width:559px;height:1px;background:#f6f6f6"></div>
<div style="position:absolute;left:510.5px;top:204.64999999999998px;width:559px;height:1px;background:#f6f6f6"></div>
<div style="position:absolute;left:510.5px;top:216.6px;width:559px;height:1px;background:#f6f6f6"></div>
<div style="position:absolute;left:510.5px;top:228.55px;width:559px;height:1px;background:#f6f6f6"></div>
<div style="position:absolute;left:510.5px;top:240.5px;width:559px;height:1px;background:#f6f6f6"></div>
<div style="position:absolute;left:510.5px;top:252.45px;width:559px;height:1px;background:#f6f6f6"></div>
<div style="position:absolute;left:510.5px;top:264.4px;width:559px;height:1px;background:#f6f6f6"></div>
<div style="position:absolute;left:510.5px;top:276.35px;width:559px;height:1px;background:#f6f6f6"></div>
<div style="position:absolute;left:510.5px;top:288.29999999999995px;width:559px;height:1px;background:#f6f6f6"></div>
<div style="position:absolute;left:510.5px;top:300.25px;width:559px;height:1px;background:#f6f6f6"></div>
<div style="position:absolute;left:510.5px;top:312.2px;width:559px;height:1px;background:#f6f6f6"></div>
<div style="position:absolute;left:510.5px;top:324.15px;width:559px;height:1px;background:#f6f6f6"></div>
<div style="position:absolute;left:510.5px;top:336.1px;width:559px;height:1px;background:#f6f6f6"></div>
<div style="position:absolute;left:510.5px;top:348.04999999999995px;width:559px;height:1px;background:#f6f6f6"></div>
<div style="position:absolute;left:650.5px;top:108.5px;width:1px;height:247.5px;background:#e9e9e9"></div>
<div style="position:absolute;left:756px;top:108.5px;width:1px;height:247.5px;background:#e9e9e9"></div>
<div style="position:absolute;left:790.5px;top:108.5px;width:1px;height:247.5px;background:#e9e9e9"></div>
<div style="position:absolute;left:825.5px;top:108.5px;width:1px;height:247.5px;background:#e9e9e9"></div>
<div style="position:absolute;left:1008.5px;top:108.5px;width:1px;height:247.5px;background:#e9e9e9"></div>
<div class="t" style="position:absolute;left:511.9px;top:108.8px;font-size:9.5px;line-height:12px;color:#222;font-weight:normal;white-space:pre;transform:scaleX(0.9430);transform-origin:0 0;">Name</div>
<div class="t" style="position:absolute;left:652.4px;top:108.8px;font-size:9.5px;line-height:12px;color:#222;font-weight:normal;white-space:pre;transform:scaleX(0.9791);transform-origin:0 0;">Value</div>
<div class="t" style="position:absolute;left:757.9px;top:108.8px;font-size:9.5px;line-height:12px;color:#222;font-weight:normal;white-space:pre;transform:scaleX(0.9471);transform-origin:0 0;">Lock</div>
<div class="t" style="position:absolute;left:793.6px;top:108.8px;font-size:9.5px;line-height:12px;color:#222;font-weight:normal;white-space:pre;transform:scaleX(0.9471);transform-origin:0 0;">Link</div>
<div style="position:absolute;left:510.5px;top:132.6px;width:140px;height:12.2px;background:#cce4f7"></div>
<div style="position:absolute;left:650.5px;top:132.6px;width:419px;height:12.2px;background:#d9d9d9"></div>
<div class="t" style="position:absolute;left:522.6px;top:121.0px;font-size:9.5px;line-height:11.95px;color:#222;font-weight:normal;white-space:pre;transform:scaleX(0.9432);transform-origin:0 0;">Pin Group Selection</div>
<div class="t" style="position:absolute;left:652.4px;top:121.0px;font-size:9.5px;line-height:11.95px;color:#222;font-weight:normal;white-space:pre;transform:scaleX(0.9864);transform-origin:0 0;">Mixed</div>
<div class="t" style="position:absolute;left:522.6px;top:132.95px;font-size:9.5px;line-height:11.95px;color:#222;font-weight:normal;white-space:pre;transform:scaleX(0.9806);transform-origin:0 0;">Operation Mode</div>
<div class="t" style="position:absolute;left:652.4px;top:132.95px;font-size:9.5px;line-height:11.95px;color:#222;font-weight:normal;white-space:pre;transform:scaleX(0.9684);transform-origin:0 0;">Custom</div>
<svg style="position:absolute;left:513.3px;top:148.70000000000002px" width="7" height="5" viewBox="0 0 7 5"><path d="M0.8 1 L3.5 4 L6.2 1" fill="none" stroke="#555" stroke-width="1.3"/></svg>
<div style="position:absolute;left:791px;top:145.9px;width:34.8px;height:11px;background:#d2d2d2"></div>
<svg style="position:absolute;left:797.5px;top:146.1px" width="23" height="10" viewBox="0 0 23 10"><path d="M4.2 0.8 L1.2 4.9 L4.2 9" fill="none" stroke="#b2b2b2" stroke-width="2.6"/><path d="M4.2 0.8 L1.2 4.9 L4.2 9" fill="none" stroke="#ebebeb" stroke-width="1.3"/><path d="M18.3 0.8 L21.3 4.9 L18.3 9" fill="none" stroke="#b2b2b2" stroke-width="2.6"/><path d="M18.3 0.8 L21.3 4.9 L18.3 9" fill="none" stroke="#ebebeb" stroke-width="1.3"/><rect x="7.2" y="0.6" width="7.6" height="9" rx="0.8" fill="#f4f4f4" stroke="#adadad" stroke-width="0.8"/><rect x="7.8" y="1.2" width="2.2" height="7.8" fill="#dcdcdc"/></svg>
<div class="t" style="position:absolute;left:522.6px;top:144.9px;font-size:9.5px;line-height:11.95px;color:#222;font-weight:normal;white-space:pre;transform:scaleX(1.0326);transform-origin:0 0;">Input/Output</div>
<div style="position:absolute;left:756px;top:157.85px;width:34.3px;height:11px;background:#d2d2d2"></div>
<div style="position:absolute;left:791px;top:157.85px;width:34.8px;height:11px;background:#d2d2d2"></div>
<svg style="position:absolute;left:767.8px;top:157.85px" width="12" height="10" viewBox="0 0 12 10"><path d="M0.9 9.6 V4.6 H7.4 V9.6 Z" fill="#ececec" stroke="#a9a9a9" stroke-width="0.9"/><path d="M2.9 9.6 V6.8 H5.4 V9.6" fill="#d2d2d2" stroke="#a9a9a9" stroke-width="0.8"/><path d="M5.6 4.4 V2.6 A2.3 2.3 0 0 1 10.4 2.4" fill="none" stroke="#a9a9a9" stroke-width="2.2"/><path d="M5.6 4.4 V2.6 A2.3 2.3 0 0 1 10.4 2.4" fill="none" stroke="#ececec" stroke-width="1"/></svg>
<svg style="position:absolute;left:802.5px;top:159.45px" width="12" height="8" viewBox="0 0 12 8"><path d="M0.8 2.6 H6 V0.6 L10.6 4 L6 7.4 V5.4 H0.8 Z" fill="#f0f0f0" stroke="#a6a6a6" stroke-width="0.9"/></svg>
<div class="t" style="position:absolute;left:534px;top:156.85px;font-size:9.5px;line-height:11.95px;color:#222;font-weight:normal;white-space:pre;transform:scaleX(0.8670);transform-origin:0 0;">RTCIC0</div>
<div class="t" style="position:absolute;left:652.4px;top:156.85px;font-size:9.5px;line-height:11.95px;color:#222;font-weight:normal;white-space:pre;transform:scaleX(1.0080);transform-origin:0 0;">None</div>
<div style="position:absolute;left:756px;top:169.8px;width:34.3px;height:11px;background:#d2d2d2"></div>
<div style="position:absolute;left:791px;top:169.8px;width:34.8px;height:11px;background:#d2d2d2"></div>
<svg style="position:absolute;left:767.8px;top:169.8px" width="12" height="10" viewBox="0 0 12 10"><path d="M0.9 9.6 V4.6 H7.4 V9.6 Z" fill="#ececec" stroke="#a9a9a9" stroke-width="0.9"/><path d="M2.9 9.6 V6.8 H5.4 V9.6" fill="#d2d2d2" stroke="#a9a9a9" stroke-width="0.8"/><path d="M5.6 4.4 V2.6 A2.3 2.3 0 0 1 10.4 2.4" fill="none" stroke="#a9a9a9" stroke-width="2.2"/><path d="M5.6 4.4 V2.6 A2.3 2.3 0 0 1 10.4 2.4" fill="none" stroke="#ececec" stroke-width="1"/></svg>
<svg style="position:absolute;left:802.5px;top:171.4px" width="12" height="8" viewBox="0 0 12 8"><path d="M0.8 2.6 H6 V0.6 L10.6 4 L6 7.4 V5.4 H0.8 Z" fill="#f0f0f0" stroke="#a6a6a6" stroke-width="0.9"/></svg>
<div class="t" style="position:absolute;left:534px;top:168.8px;font-size:9.5px;line-height:11.95px;color:#222;font-weight:normal;white-space:pre;transform:scaleX(0.8289);transform-origin:0 0;">RTCIC1</div>
<div class="t" style="position:absolute;left:652.4px;top:168.8px;font-size:9.5px;line-height:11.95px;color:#222;font-weight:normal;white-space:pre;transform:scaleX(1.0080);transform-origin:0 0;">None</div>
<div style="position:absolute;left:756px;top:181.75px;width:34.3px;height:11px;background:#d2d2d2"></div>
<div style="position:absolute;left:791px;top:181.75px;width:34.8px;height:11px;background:#d2d2d2"></div>
<svg style="position:absolute;left:767.8px;top:181.75px" width="12" height="10" viewBox="0 0 12 10"><path d="M0.9 9.6 V4.6 H7.4 V9.6 Z" fill="#ececec" stroke="#a9a9a9" stroke-width="0.9"/><path d="M2.9 9.6 V6.8 H5.4 V9.6" fill="#d2d2d2" stroke="#a9a9a9" stroke-width="0.8"/><path d="M5.6 4.4 V2.6 A2.3 2.3 0 0 1 10.4 2.4" fill="none" stroke="#a9a9a9" stroke-width="2.2"/><path d="M5.6 4.4 V2.6 A2.3 2.3 0 0 1 10.4 2.4" fill="none" stroke="#ececec" stroke-width="1"/></svg>
<svg style="position:absolute;left:802.5px;top:183.35px" width="12" height="8" viewBox="0 0 12 8"><path d="M0.8 2.6 H6 V0.6 L10.6 4 L6 7.4 V5.4 H0.8 Z" fill="#f0f0f0" stroke="#a6a6a6" stroke-width="0.9"/></svg>
<div class="t" style="position:absolute;left:534px;top:180.75px;font-size:9.5px;line-height:11.95px;color:#222;font-weight:normal;white-space:pre;transform:scaleX(0.8670);transform-origin:0 0;">RTCIC2</div>
<div class="t" style="position:absolute;left:652.4px;top:180.75px;font-size:9.5px;line-height:11.95px;color:#222;font-weight:normal;white-space:pre;transform:scaleX(1.0080);transform-origin:0 0;">None</div>
<div style="position:absolute;left:756px;top:193.7px;width:34.3px;height:11px;background:#d2d2d2"></div>
<div style="position:absolute;left:791px;top:193.7px;width:34.8px;height:11px;background:#d2d2d2"></div>
<svg style="position:absolute;left:767.8px;top:193.7px" width="12" height="10" viewBox="0 0 12 10"><path d="M0.9 9.6 V4.6 H7.4 V9.6 Z" fill="#ececec" stroke="#a9a9a9" stroke-width="0.9"/><path d="M2.9 9.6 V6.8 H5.4 V9.6" fill="#d2d2d2" stroke="#a9a9a9" stroke-width="0.8"/><path d="M5.6 4.4 V2.6 A2.3 2.3 0 0 1 10.4 2.4" fill="none" stroke="#a9a9a9" stroke-width="2.2"/><path d="M5.6 4.4 V2.6 A2.3 2.3 0 0 1 10.4 2.4" fill="none" stroke="#ececec" stroke-width="1"/></svg>
<svg style="position:absolute;left:802.5px;top:195.29999999999998px" width="12" height="8" viewBox="0 0 12 8"><path d="M0.8 2.6 H6 V0.6 L10.6 4 L6 7.4 V5.4 H0.8 Z" fill="#f0f0f0" stroke="#a6a6a6" stroke-width="0.9"/></svg>
<div class="t" style="position:absolute;left:534px;top:192.7px;font-size:9.5px;line-height:11.95px;color:#222;font-weight:normal;white-space:pre;transform:scaleX(0.8730);transform-origin:0 0;">RTCOUT</div>
<div class="t" style="position:absolute;left:652.4px;top:192.7px;font-size:9.5px;line-height:11.95px;color:#222;font-weight:normal;white-space:pre;transform:scaleX(1.0080);transform-origin:0 0;">None</div>
<div style="position:absolute;left:643px;top:129.4px;width:55.4px;height:17.8px;border:2px solid #ee2a2a;border-radius:2.5px"></div>
<div style="position:absolute;left:509.6px;top:359px;width:560.8px;height:62.5px;background:#fff;border:1px solid #d8d8d8"></div>
<div class="t" style="position:absolute;left:513.7px;top:363px;font-size:9.5px;line-height:12px;color:#222;font-weight:normal;white-space:pre;transform:scaleX(0.9634);transform-origin:0 0;">Module name:</div>
<div class="t" style="position:absolute;left:581px;top:363px;font-size:9.5px;line-height:12px;color:#222;font-weight:normal;white-space:pre;transform:scaleX(0.8471);transform-origin:0 0;">RTC</div>
<div class="t" style="position:absolute;left:513.7px;top:377.5px;font-size:9.5px;line-height:12px;color:#222;font-weight:normal;white-space:pre;transform:scaleX(0.9001);transform-origin:0 0;">Usage:</div>
<div class="t" style="position:absolute;left:581px;top:377.5px;font-size:9.5px;line-height:12px;color:#222;font-weight:normal;white-space:pre;transform:scaleX(0.9287);transform-origin:0 0;">When using RTC on P402, P403, P404, Please refer to the MCU User's Manual.</div>
<div style="position:absolute;left:288px;top:421.3px;width:788px;height:16.6px;background:#efefef;border-top:2px solid #e3e3e3;border-radius:0 0 2px 2px"></div>
<div style="position:absolute;left:287.5px;top:420px;width:56.2px;height:17.8px;background:#fff"></div>
<div style="position:absolute;left:289px;top:435.6px;width:54.5px;height:2px;background:#3a8ee0"></div>
<div class="t" style="position:absolute;left:291.8px;top:423.8px;font-size:9.5px;line-height:12px;color:#222;font-weight:normal;white-space:pre;transform:scaleX(0.9486);transform-origin:0 0;">Pin Function</div>
<div style="position:absolute;left:343.7px;top:423.3px;width:54.8px;height:14.5px;background:#f1f1f1;border-right:1px solid #d6d6d6;border-top:1px solid #e6e6e6"></div>
<div class="t" style="position:absolute;left:347.3px;top:423.8px;font-size:9.5px;line-height:12px;color:#222;font-weight:normal;white-space:pre;transform:scaleX(0.9766);transform-origin:0 0;">Pin Number</div>
<div style="position:absolute;left:284px;top:440.6px;width:796px;height:15.6px;background:#efefef;border-top:1px solid #e2e2e2"></div>
<div style="position:absolute;left:328.4px;top:441.5px;width:1px;height:14.5px;background:#cfcfcf"></div>
<div class="t" style="position:absolute;left:287.7px;top:442.1px;font-size:9.5px;line-height:12px;color:#222;font-weight:normal;white-space:pre;transform:scaleX(0.9494);transform-origin:0 0;">Summary</div>
<div style="position:absolute;left:349.6px;top:441.5px;width:1px;height:14.5px;background:#cfcfcf"></div>
<div class="t" style="position:absolute;left:330.9px;top:442.1px;font-size:9.5px;line-height:12px;color:#222;font-weight:normal;white-space:pre;transform:scaleX(0.8204);transform-origin:0 0;">BSP</div>
<div style="position:absolute;left:381.8px;top:441.5px;width:1px;height:14.5px;background:#cfcfcf"></div>
<div class="t" style="position:absolute;left:352.1px;top:442.1px;font-size:9.5px;line-height:12px;color:#222;font-weight:normal;white-space:pre;transform:scaleX(0.9118);transform-origin:0 0;">Clocks</div>
<div style="position:absolute;left:381.8px;top:440.8px;width:21.19999999999999px;height:15.5px;background:#fff"></div>
<div style="position:absolute;left:382.8px;top:453.6px;width:19.19999999999999px;height:2px;background:#3a8ee0"></div>
<div style="position:absolute;left:403px;top:441.5px;width:1px;height:14.5px;background:#cfcfcf"></div>
<div class="t" style="position:absolute;left:384.3px;top:442.1px;font-size:9.5px;line-height:12px;color:#222;font-weight:normal;white-space:pre;transform:scaleX(0.9035);transform-origin:0 0;">Pins</div>
<div style="position:absolute;left:449.1px;top:441.5px;width:1px;height:14.5px;background:#cfcfcf"></div>
<div class="t" style="position:absolute;left:405.5px;top:442.1px;font-size:9.5px;line-height:12px;color:#222;font-weight:normal;white-space:pre;transform:scaleX(1.0015);transform-origin:0 0;">Interrupts</div>
<div style="position:absolute;left:499.7px;top:441.5px;width:1px;height:14.5px;background:#cfcfcf"></div>
<div class="t" style="position:absolute;left:451.6px;top:442.1px;font-size:9.5px;line-height:12px;color:#222;font-weight:normal;white-space:pre;transform:scaleX(0.9282);transform-origin:0 0;">Event Links</div>
<div style="position:absolute;left:530.6px;top:441.5px;width:1px;height:14.5px;background:#cfcfcf"></div>
<div class="t" style="position:absolute;left:502.2px;top:442.1px;font-size:9.5px;line-height:12px;color:#222;font-weight:normal;white-space:pre;transform:scaleX(0.9048);transform-origin:0 0;">Stacks</div>
<div style="position:absolute;left:588px;top:441.5px;width:1px;height:14.5px;background:#cfcfcf"></div>
<div class="t" style="position:absolute;left:533.1px;top:442.1px;font-size:9.5px;line-height:12px;color:#222;font-weight:normal;white-space:pre;transform:scaleX(0.9708);transform-origin:0 0;">Components</div>
<div style="position:absolute;left:284px;top:457.4px;width:796px;height:1.6px;background:#d9d9d9"></div>
<div style="position:absolute;left:284px;top:459px;width:796px;height:3px;background:#ebebeb"></div>
</body></html>
